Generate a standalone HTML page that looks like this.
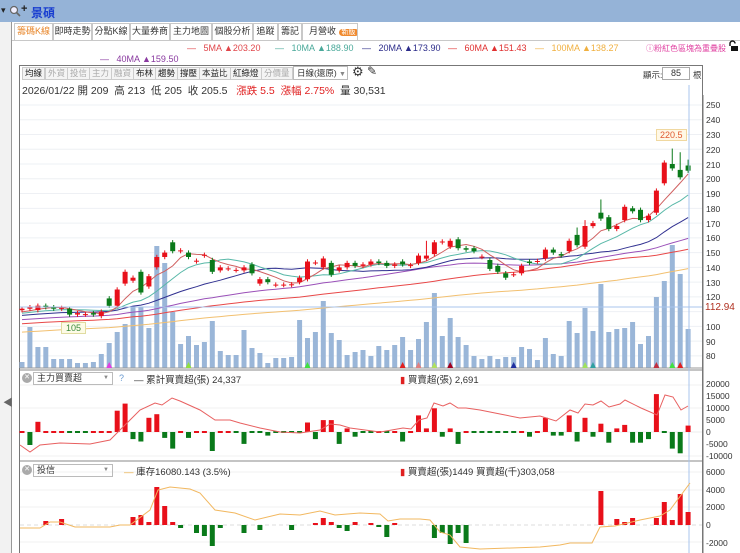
<!DOCTYPE html>
<html><head><meta charset="utf-8">
<style>
*{margin:0;padding:0;box-sizing:border-box}
body{width:740px;height:553px;overflow:hidden;background:#fff;font-family:"Liberation Sans","Noto Sans CJK TC",sans-serif;font-size:10px;color:#333;position:relative}
.a{position:absolute;white-space:nowrap}
#top{left:0;top:0;width:740px;height:22px;background:#95b3d7}
.tab{position:absolute;top:23px;height:17px;border:1px solid #c8c8c8;border-bottom:none;background:#fff;font-size:9px;line-height:15px;text-align:center;color:#333;white-space:nowrap;overflow:hidden}
.tb{position:absolute;top:67px;height:13px;border:1px solid #ccc;background:#f4f4f4;font-size:8.5px;line-height:11px;padding:0 2px;color:#222;white-space:nowrap}
.tb.g{color:#aaa}
.ax{position:absolute;left:706px;font-size:8.5px;color:#333}
</style></head><body>
<div id="top" class="a"></div>
<div class="a" style="left:1px;top:5px;font-size:9px;color:#222">▾</div>
<svg class="a" style="left:9px;top:5px" width="12" height="12"><circle cx="5" cy="5" r="3.5" fill="#eef" stroke="#666" stroke-width="1.2"/><line x1="7.5" y1="7.5" x2="11" y2="11" stroke="#666" stroke-width="1.6"/></svg>
<div class="a" style="left:21px;top:3px;font-size:11px;color:#222;font-weight:bold">+</div>
<div class="a" style="left:31px;top:4px;font-size:12px;font-weight:bold;color:#1a3fd0">景碩</div>
<div class="a" style="left:0;top:22px;width:12px;height:531px;background:#f2f2f2;border-right:1px solid #999"></div>
<div class="a" style="left:3px;top:394px;color:#666;font-size:10px">◀</div>
<div class="a" style="left:12px;top:40px;width:728px;height:1px;background:#c8c8c8"></div>
<div class="tab" style="left:14px;width:39px;color:#e8862a">籌碼K線</div>
<div class="tab" style="left:53px;width:39px">即時走勢</div>
<div class="tab" style="left:92px;width:38px">分點K線</div>
<div class="tab" style="left:130px;width:40px">大量券商</div>
<div class="tab" style="left:170px;width:42px">主力地圖</div>
<div class="tab" style="left:212px;width:41px">個股分析</div>
<div class="tab" style="left:253px;width:25px">追蹤</div>
<div class="tab" style="left:278px;width:24px">籌記</div>
<div class="tab" style="left:302px;width:56px;text-align:left;padding-left:6px">月營收 <span style="background:#f08a2e;color:#fff;border-radius:6px;font-size:7px;padding:0 3px">新版</span></div>

<div class="a" style="left:187px;top:43px;color:#e0454a;font-size:9px">—&nbsp;&nbsp;&nbsp;5MA ▲203.20</div>
<div class="a" style="left:275px;top:43px;color:#4aa99a;font-size:9px">—&nbsp;&nbsp;&nbsp;10MA ▲188.90</div>
<div class="a" style="left:362px;top:43px;color:#2c2c8a;font-size:9px">—&nbsp;&nbsp;&nbsp;20MA ▲173.90</div>
<div class="a" style="left:448px;top:43px;color:#e03030;font-size:9px">—&nbsp;&nbsp;&nbsp;60MA ▲151.43</div>
<div class="a" style="left:535px;top:43px;color:#f0b040;font-size:9px">—&nbsp;&nbsp;&nbsp;100MA ▲138.27</div>
<div class="a" style="left:646px;top:43px;color:#e040a0;font-size:8px">ⓘ粉紅色區塊為重疊股</div>
<svg class="a" style="left:727px;top:40px" width="12" height="12"><path d="M3 6 V3.5 A2.5 2.5 0 0 1 8 3.5" fill="none" stroke="#111" stroke-width="1.4"/><rect x="4" y="6" width="7" height="5" fill="#111"/></svg>
<div class="a" style="left:100px;top:54px;color:#8a3aa0;font-size:9px">—&nbsp;&nbsp;&nbsp;40MA ▲159.50</div>

<div class="a" style="left:19px;top:65px;width:684px;height:488px;border:1px solid #777;border-bottom:none"></div>
<div class="tb" style="left:22px">均線</div>
<div class="tb g" style="left:45px">外資</div>
<div class="tb g" style="left:67px">投信</div>
<div class="tb g" style="left:89px">主力</div>
<div class="tb g" style="left:111px">融資</div>
<div class="tb" style="left:133px">布林</div>
<div class="tb" style="left:155px">趨勢</div>
<div class="tb" style="left:177px">撐壓</div>
<div class="tb" style="left:199px">本益比</div>
<div class="tb" style="left:230px">紅綠燈</div>
<div class="tb g" style="left:261px">分價量</div>
<div class="a" style="left:293px;top:66px;width:55px;height:14px;border:1px solid #bbb;font-size:8.5px;line-height:12px;padding-left:3px">日線(還原) <span style="color:#888;font-size:7px">▼</span></div>
<div class="a" style="left:352px;top:64px;font-size:13px;color:#333">⚙</div>
<div class="a" style="left:367px;top:64px;font-size:12px;color:#333">✎</div>
<div class="a" style="left:643px;top:69px;font-size:8.5px">顯示:</div>
<div class="a" style="left:662px;top:67px;width:28px;height:13px;border:1px solid #aaa;font-size:9px;text-align:center;line-height:11px">85</div>
<div class="a" style="left:693px;top:69px;font-size:8.5px">根</div>
<div class="a" style="left:22px;top:83px;font-size:10.5px;color:#333">2026/01/22 開 209&nbsp; 高 213&nbsp; 低 205&nbsp; 收 205.5&nbsp;&nbsp; <span style="color:#e02020">漲跌 5.5&nbsp; 漲幅 2.75%</span>&nbsp; 量 30,531</div>

<svg class="a" style="left:0;top:0" width="740" height="553" id="sv">
<g id="g"></g>
</svg>

<div class="ax" style="top:100px">250</div><div class="ax" style="top:115px">240</div><div class="ax" style="top:130px">230</div><div class="ax" style="top:145px">220</div><div class="ax" style="top:160px">210</div><div class="ax" style="top:174px">200</div><div class="ax" style="top:189px">190</div><div class="ax" style="top:204px">180</div><div class="ax" style="top:219px">170</div><div class="ax" style="top:233px">160</div><div class="ax" style="top:248px">150</div><div class="ax" style="top:263px">140</div><div class="ax" style="top:278px">130</div><div class="ax" style="top:292px">120</div><div class="ax" style="top:322px">100</div><div class="ax" style="top:337px">90</div><div class="ax" style="top:351px">80</div>
<div class="a" style="left:705px;top:302px;font-size:10px;color:#b03020">112.94</div>
<div class="a" style="left:656px;top:129px;font-size:9px;color:#e05a30;background:#fff8e6;border:1px solid #f0d8a0;padding:0 3px">220.5</div>
<div class="a" style="left:61px;top:322px;font-size:9px;color:#3a8a3a;background:#fdfbe6;border:1px solid #e0dca0;padding:0 4px">105</div>

<div class="ax" style="top:379px">20000</div><div class="ax" style="top:391px">15000</div><div class="ax" style="top:403px">10000</div><div class="ax" style="top:415px">5000</div><div class="ax" style="top:427px">0</div><div class="ax" style="top:439px">-5000</div><div class="ax" style="top:451px">-10000</div>
<div class="ax" style="top:467px">6000</div><div class="ax" style="top:485px">4000</div><div class="ax" style="top:502px">2000</div><div class="ax" style="top:520px">0</div><div class="ax" style="top:538px">-2000</div>

<div class="a" style="left:22px;top:373px;width:10px;height:10px;border-radius:5px;background:#aaa;color:#fff;font-size:7px;text-align:center;line-height:10px">✕</div>
<div class="a" style="left:33px;top:372px;width:80px;height:13px;border:1px solid #bbb;font-size:9px;line-height:11px;padding-left:3px">主力買賣超<span style="position:absolute;right:3px;color:#888;font-size:6px">▼</span></div>
<div class="a" style="left:119px;top:373px;font-size:9px;color:#6a9ad0">?</div>
<div class="a" style="left:134px;top:372px;font-size:9.5px">— 累計買賣超(張) 24,337</div>
<div class="a" style="left:400px;top:372px;font-size:9.5px"><span style="color:#e02020">▮</span> 買賣超(張) 2,691</div>
<div class="a" style="left:22px;top:465px;width:10px;height:10px;border-radius:5px;background:#aaa;color:#fff;font-size:7px;text-align:center;line-height:10px">✕</div>
<div class="a" style="left:33px;top:464px;width:80px;height:13px;border:1px solid #bbb;font-size:9px;line-height:11px;padding-left:3px">投信<span style="position:absolute;right:3px;color:#888;font-size:6px">▼</span></div>
<div class="a" style="left:124px;top:464px;font-size:9.5px"><span style="color:#f0b040">—</span> 庫存16080.143 (3.5%)</div>
<div class="a" style="left:400px;top:464px;font-size:9.5px"><span style="color:#e02020">▮</span> 買賣超(張)1449 買賣超(千)303,058</div>

<script>
var g=document.getElementById('g'),h='';
function X(i){return 22+i*7.93}
function Y(p){return 105+(250-p)*1.476}
function r(x,y,w,hh,c){if(hh<1)hh=1;h+='<rect x="'+x.toFixed(1)+'" y="'+y.toFixed(1)+'" width="'+w+'" height="'+hh.toFixed(1)+'" fill="'+c+'"/>'}
function ln(x1,y1,x2,y2,c,w,d){h+='<line x1="'+x1+'" y1="'+y1+'" x2="'+x2+'" y2="'+y2+'" stroke="'+c+'" stroke-width="'+(w||1)+'"'+(d?' stroke-dasharray="'+d+'"':'')+'/>'}
function pl(pts,c){h+='<polyline fill="none" stroke="'+c+'" stroke-width="1" points="'+pts+'"/>'}
for(var p=80;p<=250;p+=10){ln(20,Y(p),702,Y(p),'#eef0f4',1)}
ln(20,370,702,370,'#888');ln(20,461,702,461,'#888');
ln(20,432,702,432,'#eee');ln(20,525,702,525,'#ddd',1,'4,3');
[385,408,456].forEach(function(y){ln(20,y,702,y,'#f0f0f0')});
[472,490,507,542].forEach(function(y){ln(20,y,702,y,'#f0f0f0')});
ln(703,95,703,553,'#777');
var vt=[362,327,347,347,359,359,359,363,363,362,354,343,332,324,307,307,328,246,263,312,344,336,345,342,321,351,355,355,330,348,353,363,358,358,357,320,338,332,301,333,340,355,352,350,356,346,350,345,337,350,339,322,293,336,318,337,345,356,359,356,359,357,357,347,349,360,338,354,356,321,333,308,331,284,332,329,328,322,344,336,297,281,245,274,329];
for(var i=0;i<85;i++)r(X(i)-2.5,vt[i],5,368-vt[i],'#9ab6d8');
ln(20,368,702,368,'#999');
[[X(11),'#e040e0'],[X(21),'#90e040'],[X(50),'#e08080'],[X(52),'#b0e060'],[X(72),'#30a0a0'],[X(71),'#a0e060'],[X(80),'#c03040'],[X(82),'#40e040'],[X(83),'#e02020'],[X(36),'#40e040'],[X(48),'#e02020'],[X(54),'#a00020'],[X(62),'#2030a0']].forEach(function(t){h+='<polygon points="'+(t[0]-3)+',368 '+(t[0]+3)+',368 '+t[0]+',362" fill="'+t[1]+'"/>'});
var oc=[[111,112],[112,113],[111,114],[114,113],[113,112],[112,112.5],[112,108],[108,109],[108,108.3],[109,108],[107,110],[119,114],[114,125],[129,137],[131,133],[137,123],[127,134],[140,147],[147,150],[157,151],[151,151.5],[150,147],[144,144.5],[148,148.5],[145,137],[138,140],[139,139.3],[138,138.3],[138,140],[142,136],[129,132],[132,130],[128,128.3],[128,128.3],[128,128.5],[130,133],[132,144],[143,143.3],[140,146],[143,135],[138,140],[140,143],[143,141],[141,142],[142,144],[144,143],[143,141],[141,142],[144,142],[141,141.5],[143,148],[146,148],[149,157],[157,157.5],[154,158],[159,153],[153,152],[153,151],[147,147.3],[145,139],[141,137],[136,133],[135,135.3],[136,141],[144,143],[144,144.3],[146,152],[152,150],[149,148],[151,158],[162,155],[154,168],[168,170],[177,173],[174,166],[166,168],[172,181],[180,178],[179,172],[172,175],[177,192],[197,211],[210,207],[206,201],[209,205.5]];
var hi={51:158,82:220.5,73:186,84:213,83:218,70:167,71:172};
var cl=oc.map(function(a){return a[1]});
var pad=[];for(var k=0;k<100;k++)pad.push(82+k*0.28);
var all=pad.concat(cl);
function ma(n,c){var pts=[];for(var i=0;i<85;i++){var s=0;for(var j=0;j<n;j++)s+=all[100+i-j];pts.push(X(i).toFixed(1)+','+Y(s/n).toFixed(1))}pl(pts.join(' '),c)}
ma(100,'#f2c070');ma(60,'#e84848');ma(40,'#9a50b8');ma(20,'#303090');ma(10,'#58b8a8');ma(5,'#d06060');
for(var i=0;i<85;i++){var o=oc[i][0],c=oc[i][1],up=c>=o,col=up?'#e8101a':'#0a7a1a';var t=Math.max(o,c),b=Math.min(o,c);var H=hi[i]||t+1.5,L=b-1.5;ln(X(i),Y(H),X(i),Y(L),col);r(X(i)-2.5,Y(t),5,Y(b)-Y(t),col)}
ln(20,307,702,307,'#a8c4ec');
ln(689,85,689,553,'#a8c4ec');
var v1=[0,-5.5,4.3,.4,.4,.4,-1,-.3,-.3,.6,.6,1,9,12,-3,-4,6,7.5,-2.5,-7,.4,-2.5,.3,.3,-8,0,0,-1,-5,-.5,-.5,-1.5,-.3,-.3,-.3,-.3,4,-3,5,5,-5,1.5,-2,-1,-.8,.5,-.5,.7,-4,.7,7,1.5,10,-2,1.5,-5,.4,-1,-1,-1,-1,-1,-1,.8,-2,.3,6,-1.5,-1.5,7,-4,6,-2,3.5,-4.5,1.5,3,-4.5,-4.5,-3,16,-1,-7,-9,2.7];
for(var i=0;i<85;i++){var v=v1[i]*2.37;if(Math.abs(v1[i])<1.2){r(X(i)-2.5,431,5,2,v1[i]>=0?'#e8101a':'#0a7a1a')}else if(v>0)r(X(i)-2.5,432-v,5,v,'#e8101a');else r(X(i)-2.5,432,5,-v,'#0a7a1a')}
pl('20,445 30,452 40,445 60,443 90,444 110,440 118,432 140,410 155,403 162,405 172,398 180,401 200,410 215,420 230,420 240,423 260,428 280,432 300,433 320,430 330,424 340,425 350,428 380,432 403,428 411,429 419,420 427,418 434,403 443,406 450,403 458,408 466,408 480,410 500,414 520,418 540,416 556,421 570,410 578,413 585,404 593,405 601,401 609,407 620,404 625,400 641,408 657,415 665,395 673,397 681,410 688,406','#e86060');
var s2={3:521,5:519,14:517,15:515,16:522,17:487,18:506,19:522,20:528,22:533,23:536,24:546,25:528,28:533,30:530,34:530,37:523,38:518,39:522,40:528,41:531,42:522,44:523,45:527,46:537,47:523,52:538,53:533,54:544,55:533,56:543,73:491,75:519,76:522,77:518,80:518,81:502,82:520,83:494,84:512};
for(var i=0;i<85;i++){var y=s2[i];if(y===undefined)continue;if(y<525)r(X(i)-2.5,y,5,525-y,'#e8101a');else r(X(i)-2.5,525,5,y-525,'#0a7a1a')}
pl('20,528 40,528 50,522 60,522 75,527 90,527 110,527 120,525 130,525 150,510 158,490 170,487 190,489 200,493 215,510 235,513 255,520 280,514 300,515 320,511 335,515 360,513 380,514 388,521 400,519 420,519 430,520 440,532 450,535 460,547 480,549 540,547 560,545 570,543 592,543 600,527 615,526 640,520 660,516 670,510 690,483','#f2b860');
g.innerHTML=h;
</script>
</body></html>
